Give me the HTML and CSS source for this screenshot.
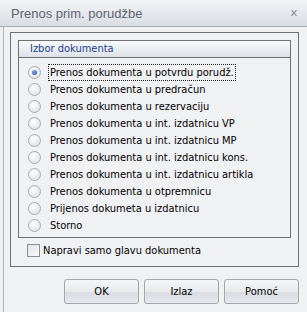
FILE: index.html
```html
<!DOCTYPE html>
<html lang="sr">
<head>
    <meta charset="UTF-8">
    <title>Prenos prim. porudžbe</title>
    <link rel="stylesheet" href="styles.css">
</head>
<body>
    <div class="window">
        <div class="titlebar">
            <span class="title">Prenos prim. porudžbe</span>
            <span class="close">&#x2715;</span>
        </div>
        <div class="content">
            <div class="panel">
                <div class="group">
                    <div class="group_head">Izbor dokumenta</div>
                    <ul class="options">
                        <li class="opt"><span class="radio checked"></span><span class="lbl focus">Prenos dokumenta u potvrdu porudž.</span></li>
                        <li class="opt"><span class="radio"></span><span class="lbl">Prenos dokumenta u predračun</span></li>
                        <li class="opt"><span class="radio"></span><span class="lbl">Prenos dokumenta u rezervaciju</span></li>
                        <li class="opt"><span class="radio"></span><span class="lbl">Prenos dokumenta u int. izdatnicu VP</span></li>
                        <li class="opt"><span class="radio"></span><span class="lbl">Prenos dokumenta u int. izdatnicu MP</span></li>
                        <li class="opt"><span class="radio"></span><span class="lbl">Prenos dokumenta u int. izdatnicu kons.</span></li>
                        <li class="opt"><span class="radio"></span><span class="lbl">Prenos dokumenta u int. izdatnicu artikla</span></li>
                        <li class="opt"><span class="radio"></span><span class="lbl">Prenos dokumenta u otpremnicu</span></li>
                        <li class="opt"><span class="radio"></span><span class="lbl">Prijenos dokumeta u izdatnicu</span></li>
                        <li class="opt"><span class="radio"></span><span class="lbl">Storno</span></li>
                    </ul>
                </div>
                <label class="check_row"><span class="checkbox"></span>Napravi samo glavu dokumenta</label>
            </div>
            <div class="buttons">
                <button class="btn">OK</button>
                <button class="btn">Izlaz</button>
                <button class="btn">Pomoć</button>
            </div>
        </div>
    </div>
</body>
</html>
```
FILE: styles.css
```css
body {
    margin: 0;
    background: #f0f0f0;
    font-family: Tahoma, "DejaVu Sans Condensed", "Liberation Sans", sans-serif;
    font-size: 11px;
    color: #000;
}

.window {
    height: 312px;
    margin-left: 3px;
    border-left: 1px solid #b4b4b4;
    background: #f0f1f3;
}

.titlebar {
    height: 26px;
    margin-left: -4px;
    padding: 0 9px 0 11px;
    display: flex;
    align-items: center;
    justify-content: space-between;
    background: linear-gradient(#f3f4f7, #d9dde4);
    border-bottom: 1px solid #a9adb5;
}

.title {
    font-family: "Liberation Sans", sans-serif;
    font-size: 13px;
    color: #5e6470;
}

.close {
    font-size: 11px;
    font-weight: bold;
    color: #8a8f97;
}

.content {
    padding: 5px 8px 0 6px;
}

.panel {
    border: 1px solid #6f6f6f;
    padding: 7px 7px 10px 7px;
    height: 216px;
}

.group {
    border: 1px solid #6f6f6f;
    height: 196px;
}

.group_head {
    height: 16px;
    line-height: 16px;
    padding-left: 11px;
    color: #1c3f8f;
    background: linear-gradient(#f9fafb, #dde1e7);
    border-bottom: 1px solid #6f6f6f;
}

.options {
    list-style: none;
    margin: 0;
    padding: 6px 0 0 9px;
}

.opt {
    height: 17px;
    display: flex;
    align-items: center;
}

.radio {
    width: 11px;
    height: 11px;
    border-radius: 50%;
    border: 1px solid #a8acb2;
    background: radial-gradient(circle at 40% 35%, #ffffff, #d8dbe0);
    margin-right: 7px;
    position: relative;
}

.radio.checked::after {
    content: "";
    position: absolute;
    left: 3px;
    top: 3px;
    width: 5px;
    height: 5px;
    border-radius: 50%;
    background: radial-gradient(circle at 40% 35%, #7fa7e6, #2452a8);
}

.lbl {
    padding: 1px 1px;
    border: 1px dotted transparent;
}

.lbl.focus {
    border-color: #222;
}

.check_row {
    display: flex;
    align-items: center;
    margin-top: 6px;
    padding-left: 9px;
}

.checkbox {
    width: 11px;
    height: 11px;
    border: 1px solid #8a8e94;
    background: linear-gradient(135deg, #e0e2e6, #fbfbfc);
    margin-right: 3px;
}

.buttons {
    display: flex;
    justify-content: flex-end;
    gap: 5px;
    margin-top: 12px;
}

.btn {
    width: 75px;
    height: 25px;
    font-family: inherit;
    font-size: 11px;
    color: #000;
    border: 1px solid #a3a6ab;
    border-radius: 3px;
    background: linear-gradient(#f4f5f7 0%, #e8eaee 50%, #d9dce2 51%, #e6e8ec 100%);
}
```
